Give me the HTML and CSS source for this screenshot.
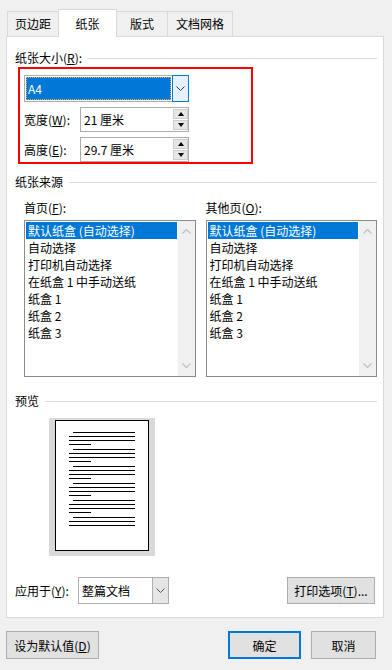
FILE: index.html
```html
<!DOCTYPE html>
<html lang="zh-CN">
<head>
  <meta charset="UTF-8">
  <meta name="viewport" content="width=device-width, initial-scale=1.0">
  <title>页面设置 - 纸张</title>
  <link rel="stylesheet" href="styles.css">
</head>
<body>
  <div class="dialog">
    <div class="tabs">
      <div class="tab tab-margins">页边距</div>
      <div class="tab tab-paper active">纸张</div>
      <div class="tab tab-layout">版式</div>
      <div class="tab tab-grid">文档网格</div>
    </div>

    <div class="panel">
      <div class="group-title">纸张大小(<u>R</u>):</div>
      <div class="size-box">
        <div class="combo combo-size">
          <div class="combo-field"><span class="combo-selected">A4</span></div>
          <div class="combo-btn focused">
            <svg width="9" height="5" viewBox="0 0 9 5"><polyline points="0.5 0.5 4.5 4.5 8.5 0.5" fill="none" stroke="#333" stroke-width="1"/></svg>
          </div>
        </div>
        <div class="field-row">
          <label>宽度(<u>W</u>):</label>
          <div class="spin">
            <span class="spin-value">21 厘米</span>
            <div class="spin-btns"><span class="spin-up"></span><span class="spin-down"></span></div>
          </div>
        </div>
        <div class="field-row">
          <label>高度(<u>E</u>):</label>
          <div class="spin">
            <span class="spin-value">29.7 厘米</span>
            <div class="spin-btns"><span class="spin-up"></span><span class="spin-down"></span></div>
          </div>
        </div>
      </div>

      <div class="group-title source-title">纸张来源</div>
      <div class="source">
        <div class="source-col">
          <div class="field-label">首页(<u>F</u>):</div>
          <div class="listbox">
            <ul class="list-items">
              <li class="selected">默认纸盒 (自动选择)</li>
              <li>自动选择</li>
              <li>打印机自动选择</li>
              <li>在纸盒 1 中手动送纸</li>
              <li>纸盒 1</li>
              <li>纸盒 2</li>
              <li>纸盒 3</li>
            </ul>
            <div class="scrollbar">
              <svg width="9" height="5" viewBox="0 0 9 5"><polyline points="0.5 4.5 4.5 0.5 8.5 4.5" fill="none" stroke="#c0c0c0" stroke-width="1.3"/></svg>
              <svg width="9" height="5" viewBox="0 0 9 5"><polyline points="0.5 0.5 4.5 4.5 8.5 0.5" fill="none" stroke="#c0c0c0" stroke-width="1.3"/></svg>
            </div>
          </div>
        </div>
        <div class="source-col">
          <div class="field-label">其他页(<u>O</u>):</div>
          <div class="listbox">
            <ul class="list-items">
              <li class="selected">默认纸盒 (自动选择)</li>
              <li>自动选择</li>
              <li>打印机自动选择</li>
              <li>在纸盒 1 中手动送纸</li>
              <li>纸盒 1</li>
              <li>纸盒 2</li>
              <li>纸盒 3</li>
            </ul>
            <div class="scrollbar">
              <svg width="9" height="5" viewBox="0 0 9 5"><polyline points="0.5 4.5 4.5 0.5 8.5 4.5" fill="none" stroke="#c0c0c0" stroke-width="1.3"/></svg>
              <svg width="9" height="5" viewBox="0 0 9 5"><polyline points="0.5 0.5 4.5 4.5 8.5 0.5" fill="none" stroke="#c0c0c0" stroke-width="1.3"/></svg>
            </div>
          </div>
        </div>
      </div>

      <div class="group-title preview-title">预览</div>
      <div class="preview">
        <div class="page">
          <div class="para"><i class="ln first"></i><i class="ln"></i><i class="ln"></i><i class="ln last"></i></div>
          <div class="para"><i class="ln first"></i><i class="ln"></i><i class="ln"></i><i class="ln last"></i></div>
          <div class="para"><i class="ln first"></i><i class="ln"></i><i class="ln"></i><i class="ln last"></i></div>
          <div class="para"><i class="ln first"></i><i class="ln"></i><i class="ln"></i><i class="ln last"></i></div>
          <div class="para"><i class="ln first"></i><i class="ln"></i><i class="ln"></i><i class="ln last"></i></div>
          <div class="para"><i class="ln first"></i><i class="ln"></i><i class="ln"></i></div>
        </div>
      </div>

      <div class="apply-row">
        <label>应用于(<u>Y</u>):</label>
        <div class="combo combo-apply">
          <div class="combo-field"><span class="combo-text">整篇文档</span></div>
          <div class="combo-btn">
            <svg width="9" height="5" viewBox="0 0 9 5"><polyline points="0.5 0.5 4.5 4.5 8.5 0.5" fill="none" stroke="#555" stroke-width="1"/></svg>
          </div>
        </div>
        <button class="btn btn-print">打印选项(<u>T</u>)...</button>
      </div>
    </div>

    <div class="footer">
      <button class="btn btn-default">设为默认值(<u>D</u>)</button>
      <button class="btn btn-ok">确定</button>
      <button class="btn btn-cancel">取消</button>
    </div>
  </div>
</body>
</html>
```

FILE: styles.css
```css
:root {
  --face: #f0f0f0;
  --tab-border: #d9d9d9;
  --field-border: #adadad;
  --select: #0078d7;
  --button: #e1e1e1;
}

* {
  margin: 0;
  padding: 0;
  box-sizing: border-box;
}

body {
  width: 392px;
  height: 670px;
  overflow: hidden;
  background-color: var(--face);
  font-family: "Noto Sans CJK SC", "Noto Sans", sans-serif;
  font-size: 12px;
  line-height: 16px;
  color: #000;
}

u {
  text-decoration: underline;
  text-underline-offset: 1px;
}

/* tabs */
.tabs {
  display: flex;
  align-items: flex-end;
  height: 36px;
  padding-left: 7px;
}

.tab {
  height: 25px;
  margin-right: -1px;
  border: 1px solid var(--tab-border);
  border-bottom: none;
  background-color: var(--face);
  display: flex;
  align-items: center;
  justify-content: center;
}

.tab-margins { width: 52px; }
.tab-paper { width: 59px; }
.tab-layout { width: 52px; }
.tab-grid { width: 66px; }

.tab.active {
  height: 28px;
  margin-bottom: -1px;
  background-color: #fff;
  position: relative;
  z-index: 1;
}

/* panel */
.panel {
  width: 378px;
  height: 582px;
  margin-left: 6px;
  padding: 13px 6px 0 8px;
  background-color: #fff;
  border: 1px solid var(--tab-border);
}

.group-title {
  display: flex;
  align-items: center;
  height: 16px;
}

.group-title::after {
  content: '';
  flex: 1;
  margin-left: 6px;
  border-top: 1px solid #dcdcdc;
}

.source-title { margin-top: 10px; }
.preview-title { margin-top: 16px; }

/* paper size */
.size-box {
  width: 235px;
  margin: 1px 0 0 3px;
  padding: 6px 0 0 4px;
  border: 2px solid #f00;
}

.combo {
  display: flex;
  height: 27px;
}

.combo-size { width: 165px; }

.combo-field {
  flex: 1;
  border: 1px solid var(--field-border);
  border-right: none;
  padding: 1px;
  display: flex;
  align-items: center;
}

.combo-selected {
  display: flex;
  align-items: center;
  width: 100%;
  height: 100%;
  padding-left: 2px;
  background-color: var(--select);
  color: #fff;
  outline: 1px dotted #e9a84a;
  outline-offset: -1px;
}

.combo-text { padding-left: 2px; }

.combo-btn {
  width: 17px;
  border: 1px solid var(--field-border);
  background-color: #e5e5e5;
  display: flex;
  align-items: center;
  justify-content: center;
}

.combo-btn.focused {
  border-color: var(--select);
  background-color: #e5f1fb;
}

.field-row {
  display: flex;
  align-items: center;
  margin-top: 5px;
}

.field-row label { width: 56px; }

.spin {
  width: 109px;
  height: 25px;
  border: 1px solid var(--field-border);
  padding-left: 3px;
  display: flex;
  align-items: center;
}

.spin-btns {
  margin-left: auto;
  width: 15px;
  height: 100%;
  padding: 1px 0;
  display: flex;
  flex-direction: column;
  gap: 1px;
}

.spin-btns span {
  flex: 1;
  background-color: #e6e6e6;
  border: 1px solid #cdcdcd;
  display: flex;
  align-items: center;
  justify-content: center;
}

.spin-up::before,
.spin-down::before {
  content: '';
  border-left: 3.5px solid transparent;
  border-right: 3.5px solid transparent;
}

.spin-up::before { border-bottom: 4px solid #000; }
.spin-down::before { border-top: 4px solid #000; }

/* paper source */
.source {
  display: grid;
  grid-template-columns: 1fr 1fr;
  column-gap: 10px;
  margin: 10px 0 0 9px;
}

.field-label {
  height: 16px;
  margin-bottom: 4px;
}

.listbox {
  height: 157px;
  border: 1px solid #8c8c8c;
  display: flex;
}

.list-items {
  flex: 1;
  list-style: none;
  padding: 1px;
}

.list-items li {
  height: 17px;
  line-height: 17px;
  padding-left: 2px;
  white-space: nowrap;
}

.list-items li.selected {
  background-color: var(--select);
  color: #fff;
}

.scrollbar {
  width: 17px;
  background-color: var(--face);
  display: flex;
  flex-direction: column;
  align-items: center;
  justify-content: space-between;
  padding: 8px 0 8px;
}

/* preview */
.preview {
  width: 106px;
  height: 138px;
  margin: 9px 0 0 34px;
  padding: 2px 6px 5px;
  background-color: #d9d9d9;
}

.page {
  height: 100%;
  background-color: #fff;
  border: 1px solid #000;
  padding-top: 11px;
}

.para { margin-bottom: 4px; }

.ln {
  display: block;
  width: 66px;
  height: 1px;
  margin: 0 0 3px 13px;
  background-color: #000;
}

.ln.first {
  width: 62px;
  margin-left: 17px;
}

.ln.last { width: 22px; }

/* apply to */
.apply-row {
  display: flex;
  align-items: center;
  margin-top: 21px;
}

.apply-row label { width: 63px; }

.combo-apply { width: 91px; }

.btn {
  height: 27px;
  font-family: inherit;
  font-size: 12px;
  color: #000;
  background-color: var(--button);
  border: 1px solid var(--field-border);
}

.btn-print {
  width: 88px;
  margin-left: auto;
  margin-right: 2px;
}

/* footer */
.footer {
  display: flex;
  padding: 13px 16px 0 6px;
}

.footer .btn { height: 28px; }

.btn-default { width: 93px; }

.btn-ok {
  width: 73px;
  margin-left: auto;
  border: 2px solid var(--select);
}

.btn-cancel {
  width: 65px;
  margin-left: 10px;
}
```
